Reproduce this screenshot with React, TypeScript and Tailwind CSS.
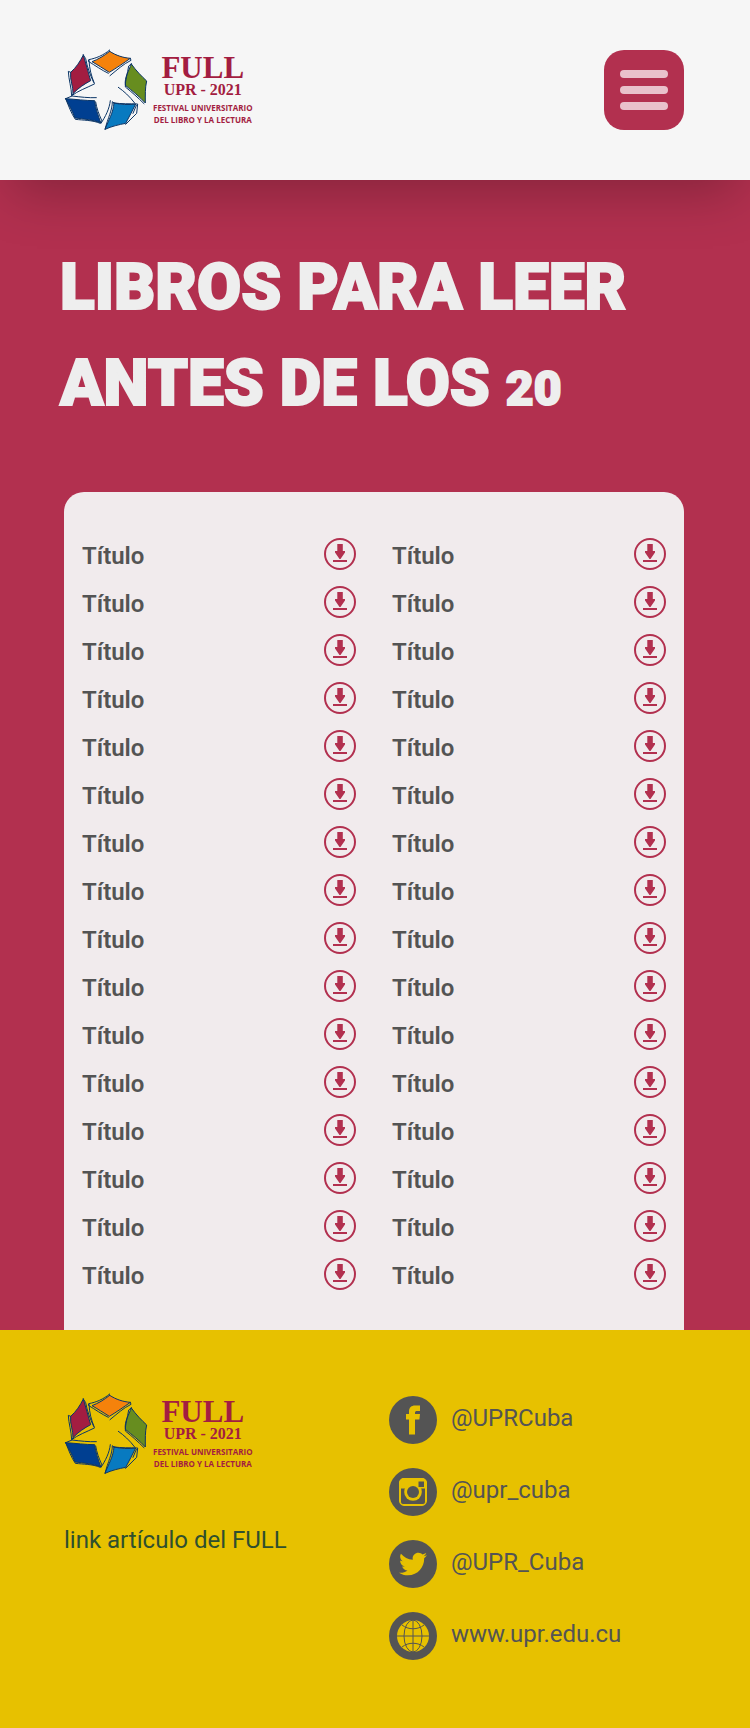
import { FaTwitter } from "react-icons/fa";

function StarOfBooks() {
  return (
    <svg viewBox="45 36 255 252" className="h-[84px] w-[85px] shrink-0" fill="none" strokeLinecap="round" strokeLinejoin="round" aria-hidden="true">
      <g stroke="#0b3566" strokeWidth="3">
        <path fill="#a31d41" d="M103 57 C93 77 82 94 65 109 C62 132 73 151 72 173 C88 156 106 144 125 134 C117 108 111 83 103 57Z" />
        <path d="M65 109 L58 106 C59 131 67 153 68 179 L72 173 M68 179 C88 164 110 157 136 144 M103 57 L110 68 C115 94 123 116 134 139" />
        <path fill="#f5820b" d="M182 46 C202 59 222 65 244 67 C223 82 204 95 181 109 C163 98 145 86 129 77 C147 70 165 60 182 46Z" />
        <path d="M182 42 C163 58 141 67 119 71 L118 76 C138 88 157 102 178 112 M120 73 C121 98 127 120 136 142 M244 67 L246 73 C222 85 205 101 183 119" />
        <path fill="#678d1f" d="M247 84 C261 104 278 121 293 135 C288 156 289 176 289 201 C272 182 250 165 229 148 C226 124 239 106 247 84Z" />
        <path d="M247 84 L239 90 C236 112 228 133 229 153 C248 168 267 185 285 203 M208 154 C225 166 241 180 257 201" />
        <path fill="#003f91" d="M50 188 C81 190 110 194 137 194 C139 217 148 238 155 260 C130 251 105 249 78 246 C70 225 60 207 50 188Z" />
        <path d="M50 188 L69 180 C94 183 119 186 142 185 M50 188 C59 210 67 233 79 250 C104 253 129 252 154 262 L158 253 C150 235 143 218 140 198 M156 262 C169 242 181 220 184 194" />
        <path fill="#087ac0" d="M195 201 C217 206 237 207 260 204 C251 223 240 243 230 262 C209 266 188 271 168 280 C178 253 193 231 195 201Z" />
        <path d="M195 201 L190 197 C190 223 177 244 168 280 M195 201 C219 204 241 203 266 204 L263 232 L230 265 M262 208 L252 232" />
      </g>
    </svg>
  );
}

function Logo() {
  return (
    <div className="flex items-center gap-1">
      <StarOfBooks />
      <div className="flex flex-col items-center whitespace-nowrap text-[#a31d41]">
        <span className="font-['Liberation_Serif',serif] text-[31px] leading-7 font-bold">FULL</span>
        <span className="mb-1 font-['Liberation_Serif',serif] text-[16px] leading-4 font-bold">UPR - 2021</span>
        <span className="font-['Open_Sans',sans-serif] text-[8px] leading-3 font-bold">FESTIVAL UNIVERSITARIO</span>
        <span className="font-['Open_Sans',sans-serif] text-[8px] leading-3 font-bold">DEL LIBRO Y LA LECTURA</span>
      </div>
    </div>
  );
}

function DownloadIcon() {
  return (
    <svg viewBox="0 0 32 32" className="size-8" aria-hidden="true">
      <circle cx="16" cy="16" r="15" fill="none" stroke="#b2304f" strokeWidth="2" />
      <path fill="#b2304f" d="M13.300 6h5.500v7h2.200v1.500L16.500 21h-1L11 14.500V13h2.300zM9 22h14v2H9z" />
    </svg>
  );
}

function FacebookGlyph() {
  return (
    <svg viewBox="0 0 48 48" className="size-12" fill="#e7c100" aria-hidden="true">
      <path d="M20 38.500V23.500h-3v-5.500h3v-2.500c0-4 2.500-6 6-6h5v5.500h-3c-1.400 0-2 .6-2 1.800V18h5l-.6 5.500H26v15z" />
    </svg>
  );
}

function InstagramGlyph() {
  return (
    <svg viewBox="0 0 28 28" className="size-7" aria-hidden="true">
      <rect x=".5" y=".5" width="27" height="27" rx="4.5" fill="none" stroke="#e7c100" />
      <path fill="#e7c100" d="M5 0h18a5 5 0 0 1 5 5v5.500H0V5a5 5 0 0 1 5-5z" />
      <path fill="#e7c100" d="M1 9h1v15a2 2 0 0 0 2 2h20a2 2 0 0 0 2-2V9h1v15a3 3 0 0 1-3 3H4a3 3 0 0 1-3-3z" />
      <circle cx="14" cy="14" r="8.800" fill="#e7c100" />
      <circle cx="14" cy="14" r="6" fill="#545454" />
      <rect x="19.500" y="3.500" width="5.500" height="5.500" fill="#545454" />
    </svg>
  );
}

function GlobeGlyph() {
  return (
    <svg viewBox="0 0 32 32" className="size-8" fill="none" stroke="#545454" aria-hidden="true">
      <circle cx="16" cy="16" r="16" fill="#e7c100" stroke="none" />
      <path d="M16 0v32M0 16h32M5 5c6 5 16 5 22 0M5 27c6-5 16-5 22 0" />
      <ellipse cx="16" cy="16" rx="9" ry="16" />
    </svg>
  );
}

const social = [
  { label: "@UPRCuba", href: "#facebook", icon: <FacebookGlyph /> },
  { label: "@upr_cuba", href: "#instagram", icon: <InstagramGlyph /> },
  { label: "@UPR_Cuba", href: "#twitter", icon: <FaTwitter className="size-7" /> },
  { label: "www.upr.edu.cu", href: "#web", icon: <GlobeGlyph /> },
];

const books = Array.from({ length: 32 }, (_, id) => ({ id, title: "Título" }));

export default function App() {
  return (
    <div className="flex min-h-screen flex-col bg-[#b2304f] font-[Roboto,sans-serif]">
      <header className="relative flex items-center justify-between bg-[#f6f6f6] pt-12 pr-[66px] pb-12 pl-16 shadow-[0_24px_50px_-12px_rgba(0,0,0,0.25)]">
        <Logo />
        <button type="button" aria-label="Menú" className="flex size-20 flex-col items-center justify-center gap-2 rounded-[20px] bg-[#b2304f]">
          <span className="h-2 w-12 rounded-full bg-[#e9c1cb]" />
          <span className="h-2 w-12 rounded-full bg-[#e9c1cb]" />
          <span className="h-2 w-12 rounded-full bg-[#e9c1cb]" />
        </button>
      </header>

      <main className="pt-[60px] pr-[66px] pl-[60px]">
        <h1 className="text-[64px] leading-[96px] font-black text-[#eeeeee] [-webkit-text-stroke:2px_#eeeeee]">
          LIBROS PARA LEER
          <br />
          ANTES DE LOS <span className="text-5xl">20</span>
        </h1>
        <ul className="mt-[60px] ml-1 grid grid-cols-2 rounded-t-[20px] bg-[#f1ebed] pt-[38px] pb-8">
          {books.map((book) => (
            <li key={book.id} className="flex h-12 items-center justify-between px-[18px]">
              <span className="pt-1 text-2xl font-semibold text-[#545454]">{book.title}</span>
              <a href="#descargar" aria-label={`Descargar ${book.title}`}>
                <DownloadIcon />
              </a>
            </li>
          ))}
        </ul>
      </main>

      <footer className="grid grow grid-cols-2 gap-x-[26px] bg-[#e7c100] pt-[62px] pr-[62px] pb-[68px] pl-16 text-2xl">
        <div className="flex flex-col items-start gap-12">
          <Logo />
          <a href="#articulo" className="text-[#2f4f2f]">link artículo del FULL</a>
        </div>
        <ul className="flex flex-col gap-6 pt-1 text-[#545454]">
          {social.map((item) => (
            <li key={item.label}>
              <a href={item.href} className="flex items-center gap-[14px]">
                <span className="flex size-12 items-center justify-center rounded-full bg-[#545454] text-[#e7c100]">{item.icon}</span>
                <span className="pb-1">{item.label}</span>
              </a>
            </li>
          ))}
        </ul>
      </footer>
    </div>
  );
}
